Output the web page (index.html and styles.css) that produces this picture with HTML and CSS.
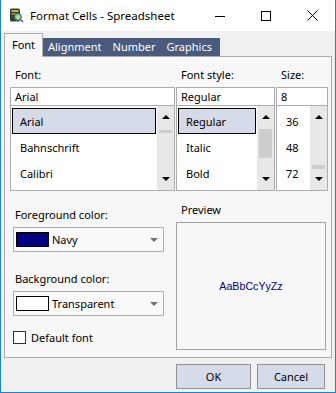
FILE: index.html
```html
<!DOCTYPE html>
<html lang="en">
<head>
    <meta charset="UTF-8">
    <title>Format Cells - Spreadsheet</title>
    <link rel="stylesheet" href="styles.css">
</head>
<body>
    <div class="window">
        <!-- Title bar -->
        <div class="titlebar">
            <svg class="app-icon" width="15" height="15" viewBox="0 0 15 15">
                <rect x="1" y="0.5" width="10" height="13" rx="1.5" fill="#3a3a3a"/>
                <rect x="2.5" y="2" width="7" height="2" fill="#c9b23a"/>
                <rect x="2.5" y="5" width="5" height="2" fill="#8a8a3a"/>
                <circle cx="9" cy="9" r="3.4" fill="#7cc8c0" stroke="#2d7a5a" stroke-width="1"/>
                <circle cx="9" cy="9" r="1.6" fill="#d8e85a"/>
                <line x1="11.3" y1="11.3" x2="14" y2="14" stroke="#6a4a8a" stroke-width="1.6"/>
            </svg>
            <span class="title">Format Cells - Spreadsheet</span>
            <div class="controls">
                <div class="ctl">
                    <svg width="10" height="10" viewBox="0 0 10 10"><line x1="0" y1="5.5" x2="10" y2="5.5" stroke="#000" stroke-width="1"/></svg>
                </div>
                <div class="ctl">
                    <svg width="10" height="10" viewBox="0 0 10 10"><rect x="0.5" y="0.5" width="9" height="9" fill="none" stroke="#000" stroke-width="1"/></svg>
                </div>
                <div class="ctl">
                    <svg width="11" height="11" viewBox="0 0 11 11"><path d="M0.5 0.5 L10.5 10.5 M10.5 0.5 L0.5 10.5" stroke="#000" stroke-width="1"/></svg>
                </div>
            </div>
        </div>

        <div class="main">
            <!-- Tabs -->
            <div class="tabs">
                <div class="tab-active">Font</div>
                <div class="tab-group">
                    <span class="tab">Alignment</span>
                    <span class="tab">Number</span>
                    <span class="tab">Graphics</span>
                </div>
            </div>

            <div class="panel">
                <div class="font-row">
                    <div class="col col-font">
                        <div class="label">Font:</div>
                        <div class="textbox">Arial</div>
                        <div class="listbox">
                            <div class="items">
                                <div class="item selected">Arial</div>
                                <div class="item">Bahnschrift</div>
                                <div class="item">Calibri</div>
                            </div>
                            <div class="scroll">
                                <div class="arrow"><span class="tri-up"></span></div>
                                <div class="track"><div class="thumb thumb-font"></div></div>
                                <div class="arrow"><span class="tri-down"></span></div>
                            </div>
                        </div>
                    </div>
                    <div class="col col-style">
                        <div class="label">Font style:</div>
                        <div class="textbox">Regular</div>
                        <div class="listbox">
                            <div class="items">
                                <div class="item selected">Regular</div>
                                <div class="item">Italic</div>
                                <div class="item">Bold</div>
                            </div>
                            <div class="scroll">
                                <div class="arrow"><span class="tri-up"></span></div>
                                <div class="track"><div class="thumb thumb-style"></div></div>
                                <div class="arrow"><span class="tri-down"></span></div>
                            </div>
                        </div>
                    </div>
                    <div class="col col-size">
                        <div class="label">Size:</div>
                        <div class="textbox">8</div>
                        <div class="listbox">
                            <div class="items">
                                <div class="item">36</div>
                                <div class="item">48</div>
                                <div class="item">72</div>
                            </div>
                            <div class="scroll">
                                <div class="arrow"><span class="tri-up"></span></div>
                                <div class="track"><div class="thumb thumb-size"></div></div>
                                <div class="arrow"><span class="tri-down"></span></div>
                            </div>
                        </div>
                    </div>
                </div>

                <div class="lower">
                    <div class="colors">
                        <div class="field-label">Foreground color:</div>
                        <div class="combo">
                            <span class="swatch swatch-navy"></span>
                            <span class="combo-text">Navy</span>
                            <span class="combo-arrow"></span>
                        </div>
                        <div class="field-label field-gap">Background color:</div>
                        <div class="combo">
                            <span class="swatch swatch-clear"></span>
                            <span class="combo-text">Transparent</span>
                            <span class="combo-arrow"></span>
                        </div>
                        <label class="check-row">
                            <span class="checkbox"></span>
                            <span>Default font</span>
                        </label>
                    </div>
                    <div class="preview-col">
                        <div class="label">Preview</div>
                        <div class="preview">AaBbCcYyZz</div>
                    </div>
                </div>
            </div>

            <div class="buttons">
                <button class="btn btn-ok">OK</button>
                <button class="btn btn-cancel">Cancel</button>
            </div>
        </div>
    </div>
</body>
</html>
```

FILE: styles.css
```css
/* Format Cells dialog */
body {
    margin: 0;
    font-family: "Noto Sans", sans-serif;
    font-size: 11px;
    color: #000;
}

.window {
    width: 336px;
    height: 393px;
    box-sizing: border-box;
    border: 1px solid #1883d7;
    border-top: none;
    background: #f0f0f0;
    display: flex;
    flex-direction: column;
}

/* Title bar */
.titlebar {
    height: 31px;
    background: #fff;
    display: flex;
    align-items: center;
}

.app-icon {
    margin-left: 8px;
}

.title {
    margin-left: 6px;
    font-size: 11.5px;
}

.controls {
    margin-left: auto;
    display: flex;
}

.ctl {
    width: 46px;
    height: 31px;
    display: flex;
    align-items: center;
    justify-content: center;
}

.main {
    flex: 1;
    display: flex;
    flex-direction: column;
    padding: 2px 3px 0 3px;
}

/* Tabs */
.tabs {
    height: 23px;
    display: flex;
    align-items: flex-end;
}

.tab-active {
    position: relative;
    z-index: 1;
    width: 37px;
    height: 23px;
    margin-bottom: -1px;
    border: 1px solid #acacac;
    border-bottom: none;
    background: #f7f7f7;
    text-align: center;
    line-height: 22px;
}

.tab-group {
    height: 18px;
    display: flex;
    background: #4b5b7e;
    color: #fff;
    padding-right: 2px;
}

.tab {
    padding: 0 6px 0 5px;
    line-height: 17px;
}

/* Panel */
.panel {
    height: 302px;
    box-sizing: border-box;
    border: 1px solid #acacac;
    background: #f7f7f7;
    padding: 8px 3px 0 5px;
}

.font-row {
    display: flex;
    gap: 1px;
}

.col-font { width: 165px; }
.col-style { width: 99px; }
.col-size { width: 52px; }

.label {
    height: 22px;
    line-height: 20px;
    padding-left: 5px;
}

.textbox {
    height: 19px;
    box-sizing: border-box;
    border: 1px solid #acacac;
    background: #fff;
    padding-left: 4px;
    line-height: 17px;
}

.listbox {
    height: 85px;
    box-sizing: border-box;
    border: 1px solid #acacac;
    border-top: none;
    background: #fff;
    display: flex;
}

.items {
    flex: 1;
    padding: 2px 1px 0 1px;
}

.item {
    height: 26px;
    box-sizing: border-box;
    padding: 2px 0 0 8px;
    line-height: 24px;
}

.item.selected {
    background: #d6dbe9;
    border: 1px solid #000;
    padding: 1px 0 0 7px;
}

.scroll {
    width: 17px;
    background: #e8e8e8;
    display: flex;
    flex-direction: column;
}

.arrow {
    height: 22px;
    display: flex;
    align-items: center;
    justify-content: center;
}

.tri-up {
    border-left: 4px solid transparent;
    border-right: 4px solid transparent;
    border-bottom: 4px solid #000;
}

.tri-down {
    border-left: 4px solid transparent;
    border-right: 4px solid transparent;
    border-top: 4px solid #000;
}

.track {
    flex: 1;
    padding: 0 2px;
}

.thumb {
    background: #cdcdcd;
}

.thumb-font { margin-top: 2px; height: 3px; }
.thumb-style { margin-top: 1px; height: 29px; }
.thumb-size { margin-top: 37px; height: 4px; }

/* Lower part */
.lower {
    display: flex;
    gap: 12px;
    padding-left: 3px;
}

.colors {
    width: 151px;
    padding-top: 13px;
    display: flex;
    flex-direction: column;
}

.field-label {
    height: 23px;
    line-height: 21px;
    padding-left: 2px;
}

.field-gap {
    margin-top: 16px;
}

.combo {
    height: 25px;
    box-sizing: border-box;
    border: 1px solid #acacac;
    background: #fafafa;
    display: flex;
    align-items: center;
    padding-left: 2px;
}

.swatch {
    width: 33px;
    height: 15px;
    box-sizing: border-box;
    border: 1px solid #000;
}

.swatch-navy { background: #000080; }
.swatch-clear { background: #fff; }

.combo-text {
    margin-left: 3px;
}

.combo-arrow {
    margin-left: auto;
    margin-right: 5px;
    border-left: 4px solid transparent;
    border-right: 4px solid transparent;
    border-top: 4px solid #707070;
}

.check-row {
    margin-top: 14px;
    display: flex;
    align-items: center;
}

.checkbox {
    width: 11px;
    height: 11px;
    border: 1px solid #333;
    background: #fff;
    margin-right: 5px;
}

.preview-col {
    width: 150px;
    padding-top: 9px;
}

.preview {
    height: 128px;
    box-sizing: border-box;
    border: 1px solid #a0a0a0;
    display: flex;
    align-items: center;
    justify-content: center;
    font-family: "Liberation Sans", Arial, sans-serif;
    font-size: 10.67px;
    color: #000080;
}

/* Buttons */
.buttons {
    display: flex;
    justify-content: flex-end;
    gap: 6px;
    padding: 6px 7px 0 0;
}

.btn {
    height: 25px;
    border: 1px solid #919191;
    background: #d6dbe9;
    font-family: "Noto Sans", sans-serif;
    font-size: 11px;
    color: #000;
    padding: 0;
}

.btn-ok { width: 75px; }
.btn-cancel { width: 68px; }
```
